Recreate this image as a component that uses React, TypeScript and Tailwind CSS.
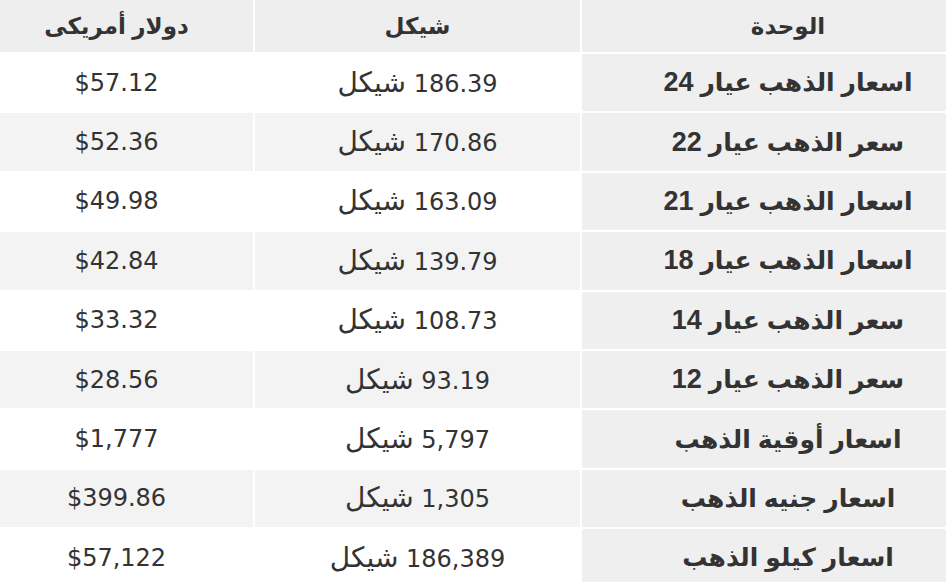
const rows = [
  { unit: 'اسعار الذهب عيار 24', ils: '186.39', usd: '$57.12' },
  { unit: 'سعر الذهب عيار 22', ils: '170.86', usd: '$52.36' },
  { unit: 'اسعار الذهب عيار 21', ils: '163.09', usd: '$49.98' },
  { unit: 'اسعار الذهب عيار 18', ils: '139.79', usd: '$42.84' },
  { unit: 'سعر الذهب عيار 14', ils: '108.73', usd: '$33.32' },
  { unit: 'سعر الذهب عيار 12', ils: '93.19', usd: '$28.56' },
  { unit: 'اسعار أوقية الذهب', ils: '5,797', usd: '$1,777' },
  { unit: 'اسعار جنيه الذهب', ils: '1,305', usd: '$399.86' },
  { unit: 'اسعار كيلو الذهب', ils: '186,389', usd: '$57,122' },
];

function Unit({ text }: { text: string }) {
  const parts = text.split(/(\d+)/).filter(Boolean);
  return (
    <>
      {parts.map((p, i) =>
        /\d/.test(p) ? (
          <span key={i} className="text-[27px]">{p}</span>
        ) : (
          <span key={i} className="text-[25px]">{p}</span>
        ),
      )}
    </>
  );
}

export default function App() {
  return (
    <div className="w-[946px] h-[582px] overflow-hidden bg-white">
      <div
        dir="rtl"
        className="-ml-[20px] w-[1014px] grid grid-cols-[412px_325px_273px] gap-[2px] text-[#333]"
      >
        {['الوحدة', 'شيكل', 'دولار أمريكى'].map((h) => (
          <div
            key={h}
            className="h-[52px] bg-[#eeeeee] flex items-center justify-center font-bold text-[23px] font-['Liberation_Sans','DejaVu_Sans',sans-serif]"
          >
            {h}
          </div>
        ))}
        {rows.map((r, i) => {
          const bg = i % 2 === 1 ? 'bg-[#f3f3f3]' : 'bg-white';
          return [
            <div
              key={r.unit}
              className="h-[57.4px] bg-[#efefef] flex items-center justify-center font-bold leading-none font-['Liberation_Sans','DejaVu_Sans',sans-serif]"
            >
              <span><Unit text={r.unit} /></span>
            </div>,
            <div
              key={r.ils}
              className={`h-[57.4px] ${bg} flex items-center justify-center text-[24px] leading-none font-['DejaVu_Sans',sans-serif]`}
            >
              <span>
                {r.ils} <span className="text-[28px]">شيكل</span>
              </span>
            </div>,
            <div
              key={r.usd}
              className={`h-[57.4px] ${bg} flex items-center justify-center text-[24px] font-['DejaVu_Sans',sans-serif]`}
            >
              {r.usd}
            </div>,
          ];
        })}
      </div>
    </div>
  );
}
